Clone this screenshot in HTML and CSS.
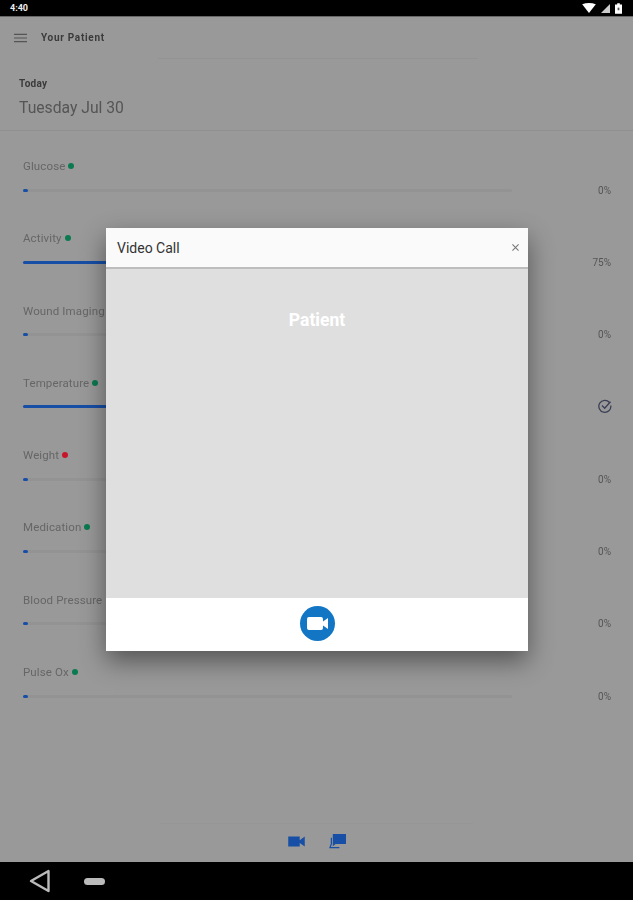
FILE: index.html
```html
<!DOCTYPE html>
<html lang="en">

<head>
    <meta charset="utf-8">
    <title>Your Patient</title>
    <link rel="stylesheet" href="styles.css">
</head>

<body>
    <div class="statusbar">
        <span class="clock">4:40</span>
        <div class="status-icons">
            <svg width="14" height="10" viewBox="0 0 15 11"><path d="M0 1.500Q7.500-1.500 15 1.500L7.500 11Z" fill="#fff"/></svg>
            <svg width="9" height="9" viewBox="0 0 10 10"><path d="M10 0V10H0Z" fill="#ccc"/></svg>
            <svg class="battery" width="7" height="11" viewBox="0 0 8 12"><path d="M2.500 0H5.500V1.500H8V12H0V1.500H2.500Z" fill="#fff"/><path d="M3 5H5V8H3Z" fill="#555"/></svg>
        </div>
    </div>

    <main class="app">
        <header class="topbar">
            <svg class="burger" width="13" height="10" viewBox="0 0 14 10"><path d="M0 1H14M0 5H14M0 9H14" stroke="#555" stroke-width="1.300"/></svg>
            <span class="title">Your Patient</span>
        </header>
        <div class="topline"></div>

        <section class="today">
            <div class="today-label">Today</div>
            <div class="today-date">Tuesday Jul 30</div>
        </section>

        <section class="metrics">
            <div class="metric">
                <div class="metric-name">Glucose <i class="dot green"></i></div>
                <div class="metric-line">
                    <div class="track"><div class="fill" style="width:1%"></div></div>
                    <span class="value">0%</span>
                </div>
            </div>
            <div class="metric">
                <div class="metric-name">Activity <i class="dot green"></i></div>
                <div class="metric-line">
                    <div class="track"><div class="fill" style="width:75%"></div></div>
                    <span class="value">75%</span>
                </div>
            </div>
            <div class="metric">
                <div class="metric-name">Wound Imaging</div>
                <div class="metric-line">
                    <div class="track"><div class="fill" style="width:1%"></div></div>
                    <span class="value">0%</span>
                </div>
            </div>
            <div class="metric">
                <div class="metric-name">Temperature <i class="dot green"></i></div>
                <div class="metric-line">
                    <div class="track"><div class="fill" style="width:100%"></div></div>
                    <span class="value check">
                        <svg width="14" height="14" viewBox="0 0 14 14" fill="none" stroke="#3b3f55" stroke-width="1.300"><path d="M11.500 3.500A6 6 0 1 0 12.800 6.500"/><path d="M4 6.500L6.700 9.200L12.500 2.800"/></svg>
                    </span>
                </div>
            </div>
            <div class="metric">
                <div class="metric-name">Weight <i class="dot red"></i></div>
                <div class="metric-line">
                    <div class="track"><div class="fill" style="width:1%"></div></div>
                    <span class="value">0%</span>
                </div>
            </div>
            <div class="metric">
                <div class="metric-name">Medication <i class="dot green"></i></div>
                <div class="metric-line">
                    <div class="track"><div class="fill" style="width:1%"></div></div>
                    <span class="value">0%</span>
                </div>
            </div>
            <div class="metric">
                <div class="metric-name">Blood Pressure</div>
                <div class="metric-line">
                    <div class="track"><div class="fill" style="width:1%"></div></div>
                    <span class="value">0%</span>
                </div>
            </div>
            <div class="metric">
                <div class="metric-name">Pulse Ox <i class="dot green"></i></div>
                <div class="metric-line">
                    <div class="track"><div class="fill" style="width:1%"></div></div>
                    <span class="value">0%</span>
                </div>
            </div>
        </section>

        <footer class="tabs">
            <svg width="17" height="11" viewBox="0 0 18 12"><path d="M0 0.500H12.500V4.500L18 0.500V11.500L12.500 7.500V11.500H0Z" fill="#174ea6"/></svg>
            <svg width="17" height="16" viewBox="0 0 18 17"><path d="M4 0H18V10.500H7L4 13Z" fill="#174ea6"/><path d="M2.500 4V10.500L1 14.500H11" fill="none" stroke="#174ea6" stroke-width="1.300"/></svg>
        </footer>
    </main>

    <div class="navbar">
        <svg width="22" height="24" viewBox="0 0 22 24"><path d="M19.500 2V22L2 12Z" fill="none" stroke="#bbb" stroke-width="2.400" stroke-linejoin="round"/></svg>
        <div class="home-pill"></div>
    </div>

    <div class="modal">
        <div class="modal-head">
            <span class="modal-title">Video Call</span>
            <svg width="7" height="7" viewBox="0 0 8 8"><path d="M0.500 0.500L7.500 7.500M7.500 0.500L0.500 7.500" stroke="#777" stroke-width="1.200"/></svg>
        </div>
        <div class="modal-body">Patient</div>
        <div class="modal-foot">
            <button class="call-btn">
                <svg width="21" height="13" viewBox="0 0 21 13"><path d="M2 0H14Q16 0 16 2V4.500L21 1V12L16 8.500V11Q16 13 14 13H2Q0 13 0 11V2Q0 0 2 0Z" fill="#fff"/></svg>
            </button>
        </div>
    </div>
</body>

</html>
```

FILE: styles.css
```css
body {
    margin: 0;
    width: 633px;
    height: 900px;
    overflow: hidden;
    position: relative;
    display: flex;
    flex-direction: column;
    background-color: #999;
    font-family: Roboto, "Liberation Sans", sans-serif;
    color: #444;
    filter: blur(0.4px);
}

.statusbar {
    height: 16px;
    background-color: #000;
    border-bottom: 1px solid #666;
    display: flex;
    align-items: center;
    justify-content: space-between;
    padding: 0 11px 0 10px;
    flex-shrink: 0;
}

.clock {
    color: #eee;
    font-size: 9px;
    font-weight: 700;
}

.status-icons {
    display: flex;
    align-items: center;
    gap: 5px;
}

.app {
    flex: 1;
    display: flex;
    flex-direction: column;
    min-height: 0;
}

.topbar {
    height: 41px;
    display: flex;
    align-items: center;
    padding-left: 14px;
    gap: 14px;
    flex-shrink: 0;
}

.title {
    font-size: 10px;
    font-weight: 700;
    color: #3a3a3a;
    letter-spacing: 0.7px;
}

.topline {
    height: 1px;
    width: 320px;
    margin-left: 158px;
    background-color: #939393;
}

.today {
    height: 72px;
    padding: 19px 0 0 19px;
    box-sizing: border-box;
    border-bottom: 1px solid #909090;
    flex-shrink: 0;
}

.today-label {
    font-size: 10px;
    font-weight: 700;
    color: #3a3a3a;
    line-height: 12px;
    letter-spacing: 0.3px;
}

.today-date {
    font-size: 15.700px;
    color: #555;
    margin-top: 8px;
    line-height: 20px;
}

.metrics {
    padding: 28px 22px 0 23px;
    flex: 1;
}

.metric {
    height: 72.300px;
}

.metric-name {
    font-size: 11.500px;
    letter-spacing: 0.12px;
    line-height: 14px;
    color: #666;
    display: flex;
    align-items: center;
    gap: 3px;
}

.dot {
    width: 6px;
    height: 6px;
    border-radius: 50%;
}

.green {
    background-color: #0b7a50;
}

.red {
    background-color: #c5162a;
}

.metric-line {
    display: flex;
    align-items: center;
    justify-content: space-between;
    margin-top: 12px;
    height: 10px;
}

.track {
    width: 489px;
    height: 3px;
    background-color: #939393;
    border-radius: 2px;
}

.fill {
    height: 3px;
    min-width: 5px;
    border-radius: 2px;
    background-color: #174ea6;
}

.value {
    font-size: 10px;
    color: #555;
    display: flex;
    align-items: center;
}

.check {
    margin: -2px -1px 0 0;
}

.tabs {
    height: 39px;
    margin: 0 160px;
    border-top: 1px solid #969696;
    display: flex;
    align-items: center;
    justify-content: center;
    gap: 24px;
    padding-bottom: 3px;
    box-sizing: border-box;
    flex-shrink: 0;
}

.navbar {
    height: 38px;
    background-color: #000;
    display: flex;
    align-items: center;
    padding-left: 29px;
    gap: 33px;
    flex-shrink: 0;
}

.home-pill {
    width: 21px;
    height: 7px;
    border-radius: 4px;
    background-color: #bbb;
}

.modal {
    position: absolute;
    left: 106px;
    top: 228px;
    width: 422px;
    height: 423px;
    display: flex;
    flex-direction: column;
    background-color: #fff;
    box-shadow: 0 10px 24px rgba(0, 0, 0, 0.45);
}

.modal-head {
    height: 39px;
    padding: 0 9px 0 11px;
    display: flex;
    align-items: center;
    justify-content: space-between;
    background-color: #fafafa;
    border-bottom: 2px solid #bdbdbd;
}

.modal-title {
    font-size: 14px;
    color: #333;
}

.modal-body {
    flex: 1;
    background-color: #dfdfdf;
    color: #fff;
    font-size: 17.500px;
    font-weight: 700;
    text-align: center;
    padding-top: 41px;
    line-height: 20px;
}

.modal-foot {
    height: 53px;
    padding-bottom: 3px;
    box-sizing: border-box;
    display: flex;
    align-items: center;
    justify-content: center;
    background-color: #fff;
}

.call-btn {
    width: 35px;
    height: 35px;
    padding: 0;
    border: none;
    border-radius: 50%;
    background-color: #1276c4;
    display: flex;
    align-items: center;
    justify-content: center;
}
```
